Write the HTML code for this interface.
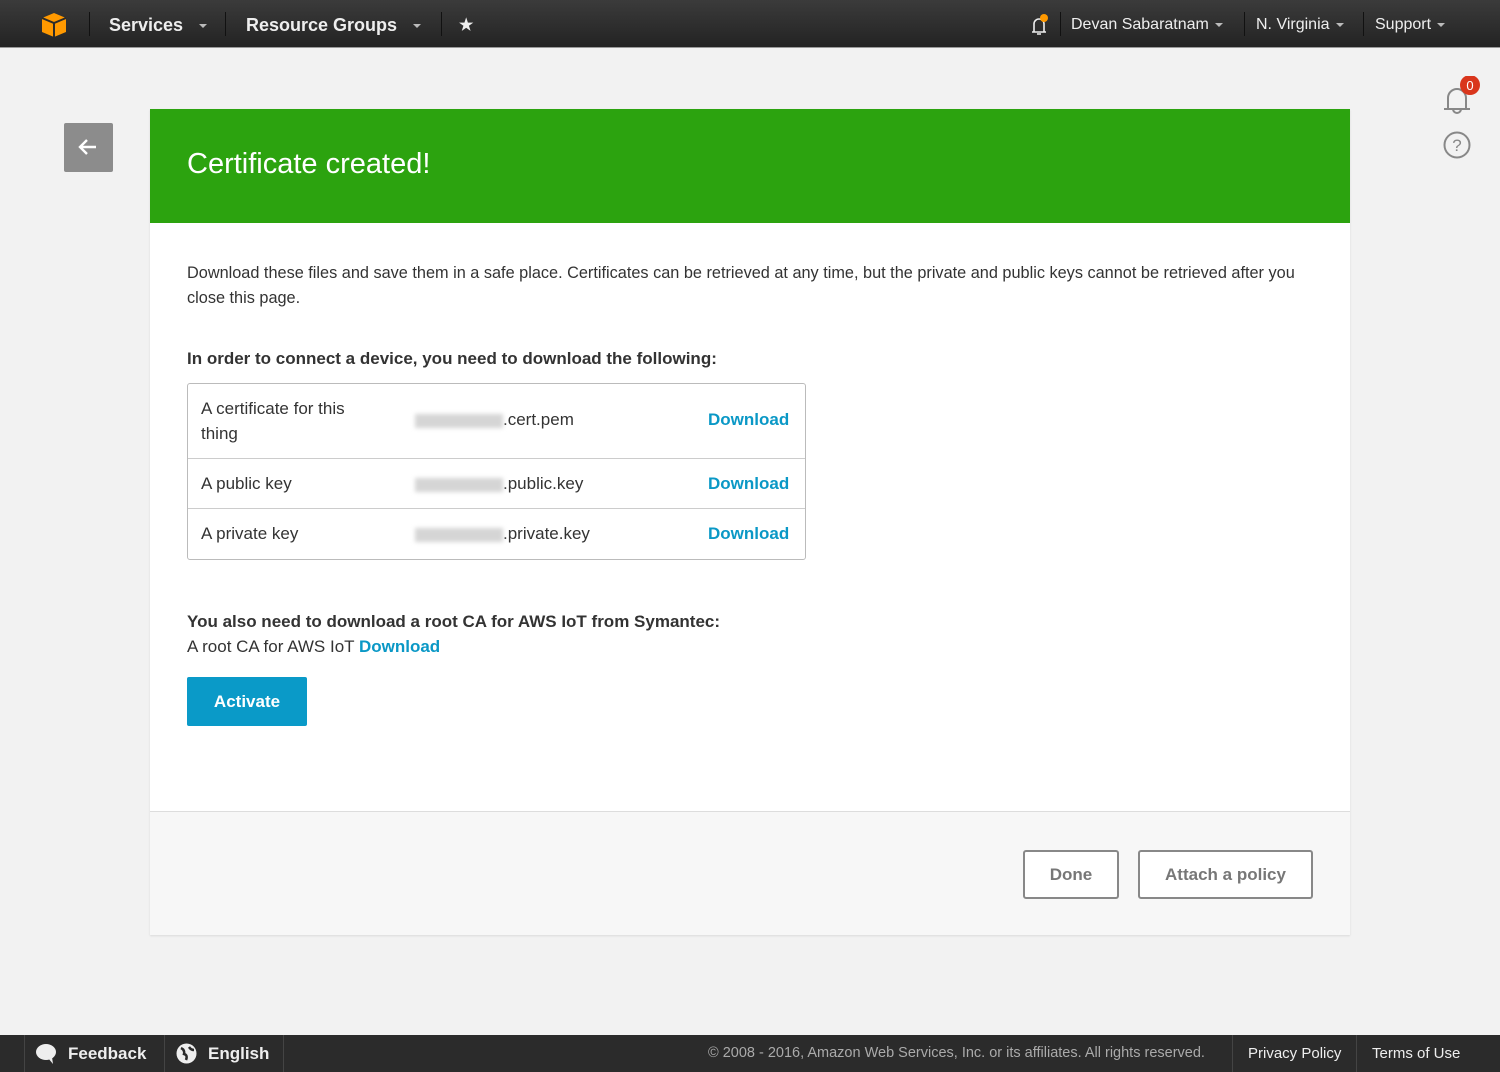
<!DOCTYPE html>
<html><head><meta charset="utf-8"><style>
*{box-sizing:border-box;margin:0;padding:0}
body{width:1500px;height:1072px;background:#f2f2f2;font-family:"Liberation Sans",sans-serif;position:relative;overflow:hidden;color:#333}
.nav{position:absolute;left:0;top:0;width:1500px;height:48px;background:linear-gradient(#3b3b3b,#232323);border-bottom:1px solid #999}
.nav .t{position:absolute;top:15px;color:#eee;font-size:18px;font-weight:bold}
.nav .n{position:absolute;top:16px;color:#eee;font-size:16px}
.sep{position:absolute;top:12px;width:1px;height:24px;background:#111}
.car{display:inline-block;width:0;height:0;border-left:4px solid transparent;border-right:4px solid transparent;border-top:4px solid #bbb;vertical-align:middle;margin-left:6px}
.back{position:absolute;left:64px;top:123px;width:49px;height:49px;background:#8c8c8c;border-radius:2px}
.card{position:absolute;left:150px;top:109px;width:1200px;height:826px;background:#fff;box-shadow:0 1px 2px rgba(0,0,0,.1)}
.green{height:114px;background:#2ca30f;color:#fff;font-size:29px;padding:39px 0 0 37px}
.body{padding:0 37px;font-size:16px;color:#333}
.tbl{position:absolute;left:37px;top:274px;width:619px;height:177px;border:1px solid #bbb;border-radius:3px}
.row{position:absolute;left:0;width:617px;border-top:1px solid #ccc}
.row span{position:absolute;font-size:17px}
.dl{color:#0a98c6;font-weight:bold}
.blur{display:inline-block;width:88px;height:14px;background:#d5d5d5;filter:blur(2px);vertical-align:middle}
.foot{position:absolute;left:0;top:702px;width:1200px;height:124px;background:#f7f7f7;border-top:1px solid #ddd}
.btn{position:absolute;top:38px;height:49px;border:2px solid #888;border-radius:3px;background:#fff;color:#777;font-weight:bold;font-size:17px;text-align:center;line-height:45px}
.bb{position:absolute;left:0;top:1035px;width:1500px;height:37px;background:#2b2b2b;color:#eee}
</style></head><body>
<div class="nav">
<svg style="position:absolute;left:41px;top:12px" width="26" height="26" viewBox="0 0 26 26"><path d="M13 1 L25 6 V20 L13 25 L1 20 V6Z" fill="#f90"/><path d="M1 6 L13 11 L25 6 M13 11 V25" stroke="#2b2b2b" stroke-width="2" fill="none"/></svg>
<div class="sep" style="left:89px"></div>
<div class="t" style="left:109px">Services<span class="car" style="margin-left:16px"></span></div>
<div class="sep" style="left:225px"></div>
<div class="t" style="left:246px">Resource Groups<span class="car" style="margin-left:16px"></span></div>
<div class="sep" style="left:441px"></div>
<div class="t" style="left:459px;font-size:16px">★</div>
<svg style="position:absolute;left:1028px;top:13px" width="24" height="24" viewBox="0 0 24 24"><path d="M4 19 H18 M6 19 V11 a5 5 0 0 1 10 0 V19 M9 21 h4" stroke="#eee" stroke-width="1.6" fill="none"/><circle cx="16" cy="5" r="4" fill="#f90"/></svg>
<div class="sep" style="left:1060px"></div>
<div class="n" style="left:1071px">Devan Sabaratnam<span class="car"></span></div>
<div class="sep" style="left:1244px"></div>
<div class="n" style="left:1256px">N. Virginia<span class="car"></span></div>
<div class="sep" style="left:1363px"></div>
<div class="n" style="left:1375px">Support<span class="car"></span></div>
</div>
<svg style="position:absolute;left:1440px;top:76px" width="44" height="40" viewBox="0 0 44 40"><path d="M4 33 H30 M8 33 V22 a9 9 0 0 1 18 0 V33 M13 33 a4 4 0 0 0 8 0" stroke="#888" stroke-width="2" fill="none"/><circle cx="30" cy="9" r="10" fill="#d9361c"/><text x="30" y="14" fill="#fff" font-size="13" text-anchor="middle" font-family="Liberation Sans">0</text></svg>
<svg style="position:absolute;left:1443px;top:131px" width="28" height="28" viewBox="0 0 28 28"><circle cx="14" cy="14" r="12.5" stroke="#888" stroke-width="2" fill="none"/><text x="14" y="20" fill="#888" font-size="17" text-anchor="middle" font-family="Liberation Sans">?</text></svg>
<div class="back"><svg width="49" height="49" viewBox="0 0 49 49"><path d="M32 24 H17 M23 17 L16 24 L23 31" stroke="#fff" stroke-width="2.4" fill="none"/></svg></div>
<div class="card">
<div class="green">Certificate created!</div>
<div class="body">
<p style="position:absolute;left:37px;top:152px;width:1130px;line-height:25px;font-size:16.3px">Download these files and save them in a safe place. Certificates can be retrieved at any time, but the private and public keys cannot be retrieved after you close this page.</p>
<p style="position:absolute;left:37px;top:240px;font-weight:bold;font-size:17px">In order to connect a device, you need to download the following:</p>
<div class="tbl">
<div class="row" style="top:-1px;height:75px;border-top:none"><span style="left:13px;top:13px;line-height:25px">A certificate for this<br>thing</span><span style="left:227px;top:27px"><i class="blur"></i>.cert.pem</span><span class="dl" style="left:520px;top:27px">Download</span></div>
<div class="row" style="top:74px;height:51px"><span style="left:13px;top:15px">A public key</span><span style="left:227px;top:15px"><i class="blur"></i>.public.key</span><span class="dl" style="left:520px;top:15px">Download</span></div>
<div class="row" style="top:124px;height:51px"><span style="left:13px;top:15px">A private key</span><span style="left:227px;top:15px"><i class="blur"></i>.private.key</span><span class="dl" style="left:520px;top:15px">Download</span></div>
</div>
<p style="position:absolute;left:37px;top:503px;font-weight:bold;font-size:17px">You also need to download a root CA for AWS IoT from Symantec:</p>
<p style="position:absolute;left:37px;top:528px;font-size:17px">A root CA for AWS IoT <span class="dl">Download</span></p>
<div style="position:absolute;left:37px;top:568px;width:120px;height:49px;background:#0a9ac8;border-radius:2px;color:#fff;font-weight:bold;font-size:17px;text-align:center;line-height:49px">Activate</div>
</div>
<div class="foot">
<div class="btn" style="left:873px;width:96px">Done</div>
<div class="btn" style="left:988px;width:175px">Attach a policy</div>
</div>
</div>
<div class="bb">
<div style="position:absolute;left:24px;top:0;width:1px;height:37px;background:#444"></div>
<svg style="position:absolute;left:35px;top:8px" width="22" height="22" viewBox="0 0 22 22"><ellipse cx="11" cy="9" rx="10" ry="8" fill="#eee"/><path d="M13 15 L18 21 L17 14Z" fill="#eee"/></svg>
<div style="position:absolute;left:68px;top:9px;font-weight:bold;font-size:17px">Feedback</div>
<div style="position:absolute;left:164px;top:0;width:1px;height:37px;background:#444"></div>
<svg style="position:absolute;left:176px;top:8px" width="21" height="21" viewBox="0 0 21 21"><circle cx="10.5" cy="10.5" r="10" fill="#eee"/><path d="M5 5 q4 2 3 6 q4 1 2 6 M13 4 q2 3 5 3" stroke="#2b2b2b" stroke-width="2.5" fill="none"/></svg>
<div style="position:absolute;left:208px;top:9px;font-weight:bold;font-size:17px">English</div>
<div style="position:absolute;left:283px;top:0;width:1px;height:37px;background:#444"></div>
<div style="position:absolute;left:708px;top:10px;font-size:14.5px;color:#aaa">© 2008 - 2016, Amazon Web Services, Inc. or its affiliates. All rights reserved.</div>
<div style="position:absolute;left:1232px;top:0;width:1px;height:37px;background:#444"></div>
<div style="position:absolute;left:1248px;top:10px;font-size:15px">Privacy Policy</div>
<div style="position:absolute;left:1356px;top:0;width:1px;height:37px;background:#444"></div>
<div style="position:absolute;left:1372px;top:10px;font-size:15px">Terms of Use</div>
</div>
</body></html>
